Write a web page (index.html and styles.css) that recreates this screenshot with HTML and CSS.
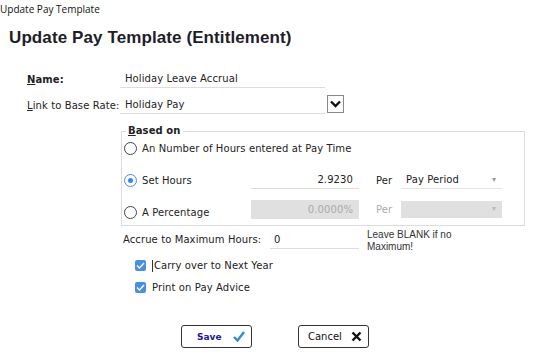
FILE: index.html
```html
<!DOCTYPE html>
<html lang="en">
<head>
  <title>Update Pay Template</title>
  <link rel="stylesheet" href="styles.css">
</head>
<body>
  <div class="titlebar">Update Pay Template</div>
  <h1>Update Pay Template (Entitlement)</h1>

  <div class="row first">
    <label class="lbl strong"><u>N</u>ame:</label>
    <div class="field">Holiday Leave Accrual</div>
  </div>
  <div class="row second">
    <label class="lbl"><u>L</u>ink to Base Rate:</label>
    <div class="field">Holiday Pay</div>
    <span class="ddbtn">
      <svg width="11" height="8" viewBox="0 0 11 8"><path d="M1 1.5 L5.5 6 L10 1.5" fill="none" stroke="#111" stroke-width="2.4"/></svg>
    </span>
  </div>

  <fieldset class="based">
    <legend><u>B</u>ased on</legend>
    <div class="opts">
      <div class="opt wide"><span class="radio"></span>An Number of Hours entered at Pay Time</div>

      <div class="opt"><span class="radio on"></span>Set Hours</div>
      <div class="num">2.9230</div>
      <div class="per">Per</div>
      <div class="sel">Pay Period<span class="caret">&#9662;</span></div>

      <div class="opt low"><span class="radio"></span>A Percentage</div>
      <div class="num off">0.0000%</div>
      <div class="per off">Per</div>
      <div class="sel off"><span class="caret">&#9662;</span></div>
    </div>
  </fieldset>

  <div class="accrue">
    <label class="lbl">Accrue to Maximum Hours:</label>
    <div class="max">0</div>
    <div class="note">Leave BLANK if no<br>Maximum!</div>
  </div>

  <div class="checks">
    <div class="chk"><span class="box"><svg width="9" height="7" viewBox="0 0 9 7"><path d="M1 3.5 L3.5 6 L8 1" fill="none" stroke="#fff" stroke-width="1.3"/></svg></span><span class="caretbar"></span>Carry over to Next Year</div>
    <div class="chk"><span class="box"><svg width="9" height="7" viewBox="0 0 9 7"><path d="M1 3.5 L3.5 6 L8 1" fill="none" stroke="#fff" stroke-width="1.3"/></svg></span>Print on Pay Advice</div>
  </div>

  <div class="buttons">
    <button class="btn save">Save
      <svg width="12" height="11" viewBox="0 0 12 11"><path d="M1 6 L4.5 9.5 L11 1" fill="none" stroke="#2a8fe0" stroke-width="2.4"/></svg>
    </button>
    <button class="btn cancel">Cancel
      <svg width="11" height="11" viewBox="0 0 11 11"><path d="M1.5 1.5 L9.5 9.5 M9.5 1.5 L1.5 9.5" fill="none" stroke="#111" stroke-width="2.4"/></svg>
    </button>
  </div>
</body>
</html>
```

FILE: styles.css
```css
html, body {
  margin: 0;
  background: #fff;
}
body {
  font-family: "DejaVu Sans", Verdana, sans-serif;
  font-size: 10px;
  letter-spacing: 0.1px;
  color: #222;
  width: 557px;
  height: 360px;
  overflow: hidden;
}
.titlebar {
  font-family: "Open Sans", "Noto Sans", sans-serif;
  font-size: 10px;
  letter-spacing: 0;
  height: 18px;
  line-height: 18px;
  color: #111;
}
h1 {
  font-family: "Liberation Sans", Arial, sans-serif;
  font-size: 17px;
  font-weight: bold;
  letter-spacing: 0.1px;
  line-height: 22px;
  margin: 9px 0 0 9px;
  color: #1e1e28;
}
.row {
  display: flex;
  align-items: center;
  margin-left: 27px;
}
.row.first {
  margin-top: 21px;
}
.row.second {
  margin-top: 8px;
}
.lbl {
  width: 93px;
}
.strong {
  font-weight: bold;
}
.field {
  width: 200px;
  height: 17px;
  line-height: 17px;
  padding-left: 5px;
  border-bottom: 1px solid #ddd;
}
.ddbtn {
  width: 15px;
  height: 16px;
  margin-left: 2px;
  margin-top: -2px;
  border: 1px solid #888;
  display: flex;
  align-items: center;
  justify-content: center;
}
.based {
  margin: 10px 0 0 121px;
  width: 398px;
  padding: 1px 2px 4px 2px;
  border: 1px solid #ddd;
}
.based legend {
  font-weight: bold;
  padding: 0 2px;
  margin-left: 2px;
  line-height: 14px;
}
.opts {
  display: grid;
  grid-template-columns: 127px 108px 42px 101px;
  align-items: center;
}
.opt {
  display: flex;
  align-items: center;
  height: 18px;
}
.opt.wide {
  grid-column: 1 / -1;
  margin-bottom: 14px;
}
.opt.low {
  margin-top: 14px;
}
.radio {
  width: 11px;
  height: 11px;
  border: 1px solid #444;
  border-radius: 50%;
  margin-right: 5px;
  display: flex;
  align-items: center;
  justify-content: center;
}
.radio.on {
  border-color: #4a8fe0;
}
.radio.on::after {
  content: "";
  width: 5px;
  height: 5px;
  border-radius: 50%;
  background: #3d86e0;
}
.num {
  height: 16px;
  line-height: 16px;
  text-align: right;
  padding-right: 6px;
  border-bottom: 1px solid #ddd;
}
.num.off {
  margin-top: 8px;
  height: 19px;
  line-height: 19px;
  border-bottom: none;
  background: #e0e0e0;
  color: #aaa;
}
.per {
  padding-left: 17px;
}
.per.off {
  margin-top: 8px;
  color: #aaa;
}
.sel {
  position: relative;
  height: 16px;
  line-height: 16px;
  padding-left: 5px;
  border-bottom: 1px solid #e4e4e4;
}
.sel.off {
  margin-top: 8px;
  height: 17px;
  border-bottom: none;
  background: #e0e0e0;
}
.caret {
  position: absolute;
  right: 6px;
  top: 0;
  color: #999;
  font-size: 8px;
}
.sel.off .caret {
  color: #bbb;
}
.accrue {
  display: flex;
  align-items: flex-start;
  margin: 5px 0 0 123px;
}
.accrue .lbl {
  width: 147px;
  line-height: 17px;
}
.max {
  width: 85px;
  height: 17px;
  line-height: 17px;
  padding-left: 4px;
  border-bottom: 1px solid #ddd;
}
.note {
  font-family: "Liberation Sans", Arial, sans-serif;
  font-size: 10px;
  letter-spacing: 0;
  line-height: 12px;
  margin: -2px 0 0 8px;
  color: #333;
}
.checks {
  margin: 7px 0 0 135px;
  display: flex;
  flex-direction: column;
  gap: 11px;
}
.chk {
  display: flex;
  align-items: center;
  height: 11px;
}
.box {
  width: 11px;
  height: 11px;
  border-radius: 2px;
  background: #4a90e2;
  margin-right: 6px;
  display: flex;
  align-items: center;
  justify-content: center;
}
.caretbar {
  width: 1px;
  height: 12px;
  background: #333;
  margin-right: 1px;
}
.buttons {
  display: flex;
  gap: 46px;
  margin: 32px 0 0 181px;
}
.btn {
  width: 71px;
  height: 23px;
  border: 1px solid #333;
  border-radius: 3px;
  background: #fff;
  font-family: "DejaVu Sans", Verdana, sans-serif;
  font-size: 10px;
  display: flex;
  align-items: center;
  justify-content: space-between;
  padding: 0 6px 0 15px;
}
.save {
  color: #1818a0;
  font-weight: bold;
  font-size: 9px;
}
.cancel {
  color: #111;
  padding-left: 9px;
}
```
